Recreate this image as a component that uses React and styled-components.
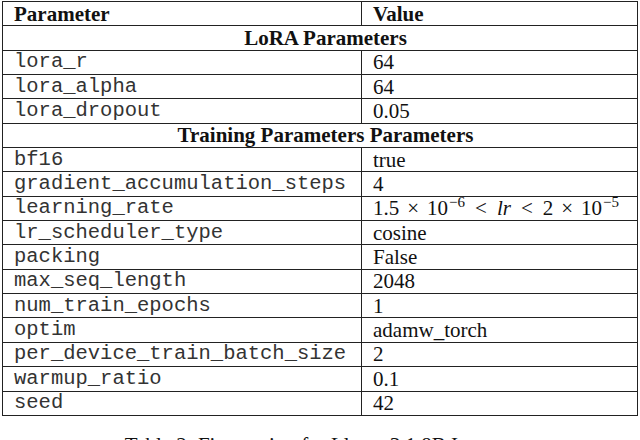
import React from 'react';
import styled, { createGlobalStyle } from 'styled-components';

const GlobalStyle = createGlobalStyle`
  html, body {
    margin: 0;
    padding: 0;
    background: #ffffff;
    overflow: hidden;
  }
`;

const Page = styled.div`
  width: 640px;
  height: 440px;
  padding: 1px 2px 0 2px;
  box-sizing: border-box;
  font-family: "Liberation Serif", "Times New Roman", serif;
  color: #111;
`;

const Table = styled.table`
  width: 636px;
  border-collapse: collapse;
  border: 1px solid #222;
  table-layout: fixed;
`;

const Row = styled.tr`
  height: 24.35px;
`;

const Cell = styled.td`
  border: 1px solid #222;
  padding: 0 0 0 11px;
  height: 23px;
  line-height: 22px;
  vertical-align: middle;
  white-space: nowrap;
  font-size: ${(p) => (p.$mono ? '20.5px' : '21px')};
  font-family: ${(p) =>
    p.$mono
      ? '"Liberation Mono", "Courier New", monospace'
      : '"Liberation Serif", "Times New Roman", serif'};
  color: ${(p) => (p.$mono ? '#333' : '#111')};
  font-weight: ${(p) => (p.$bold ? 700 : 400)};
  text-align: ${(p) => (p.$center ? 'center' : 'left')};
`;

const Math = styled.span`
  font-family: "Liberation Serif", "Times New Roman", serif;
  font-size: 21px;
`;

const Var = styled.i`
  font-style: italic;
`;

const Op = styled.span`
  margin: 0 ${(p) => (p.$rel ? 10 : 8)}px;
`;

const Sup = styled.sup`
  font-size: 15px;
  line-height: 0;
  vertical-align: 8px;
  margin-left: 1px;
`;

const Caption = styled.div`
  margin-top: 17px;
  text-align: center;
  font-size: 21px;
  line-height: 24px;
`;

const lora = [
  ['lora_r', '64'],
  ['lora_alpha', '64'],
  ['lora_dropout', '0.05'],
];

const training = [
  ['bf16', 'true'],
  ['gradient_accumulation_steps', '4'],
  ['learning_rate', 'lr'],
  ['lr_scheduler_type', 'cosine'],
  ['packing', 'False'],
  ['max_seq_length', '2048'],
  ['num_train_epochs', '1'],
  ['optim', 'adamw_torch'],
  ['per_device_train_batch_size', '2'],
  ['warmup_ratio', '0.1'],
  ['seed', '42'],
];

const LearningRate = () => (
  <Math>
    1.5<Op>×</Op>10<Sup>−6</Sup>
    <Op $rel>&lt;</Op>
    <Var>lr</Var>
    <Op $rel>&lt;</Op>2<Op>×</Op>10<Sup>−5</Sup>
  </Math>
);

const ParamRow = ({ name, value }) => (
  <Row>
    <Cell $mono>{name}</Cell>
    <Cell>{value === 'lr' ? <LearningRate /> : value}</Cell>
  </Row>
);

const SectionRow = ({ title }) => (
  <Row>
    <Cell colSpan={2} $bold $center>
      {title}
    </Cell>
  </Row>
);

export default function App() {
  return (
    <Page>
      <GlobalStyle />
      <Table>
        <colgroup>
          <col style={{ width: '359px' }} />
          <col />
        </colgroup>
        <tbody>
          <Row>
            <Cell $bold>Parameter</Cell>
            <Cell $bold>Value</Cell>
          </Row>
          <SectionRow title="LoRA Parameters" />
          {lora.map(([n, v]) => (
            <ParamRow key={n} name={n} value={v} />
          ))}
          <SectionRow title="Training Parameters Parameters" />
          {training.map(([n, v]) => (
            <ParamRow key={n} name={n} value={v} />
          ))}
        </tbody>
      </Table>
      <Caption>Table 2: Fine-tuning for Llama 3.1 8B Instruct</Caption>
    </Page>
  );
}
